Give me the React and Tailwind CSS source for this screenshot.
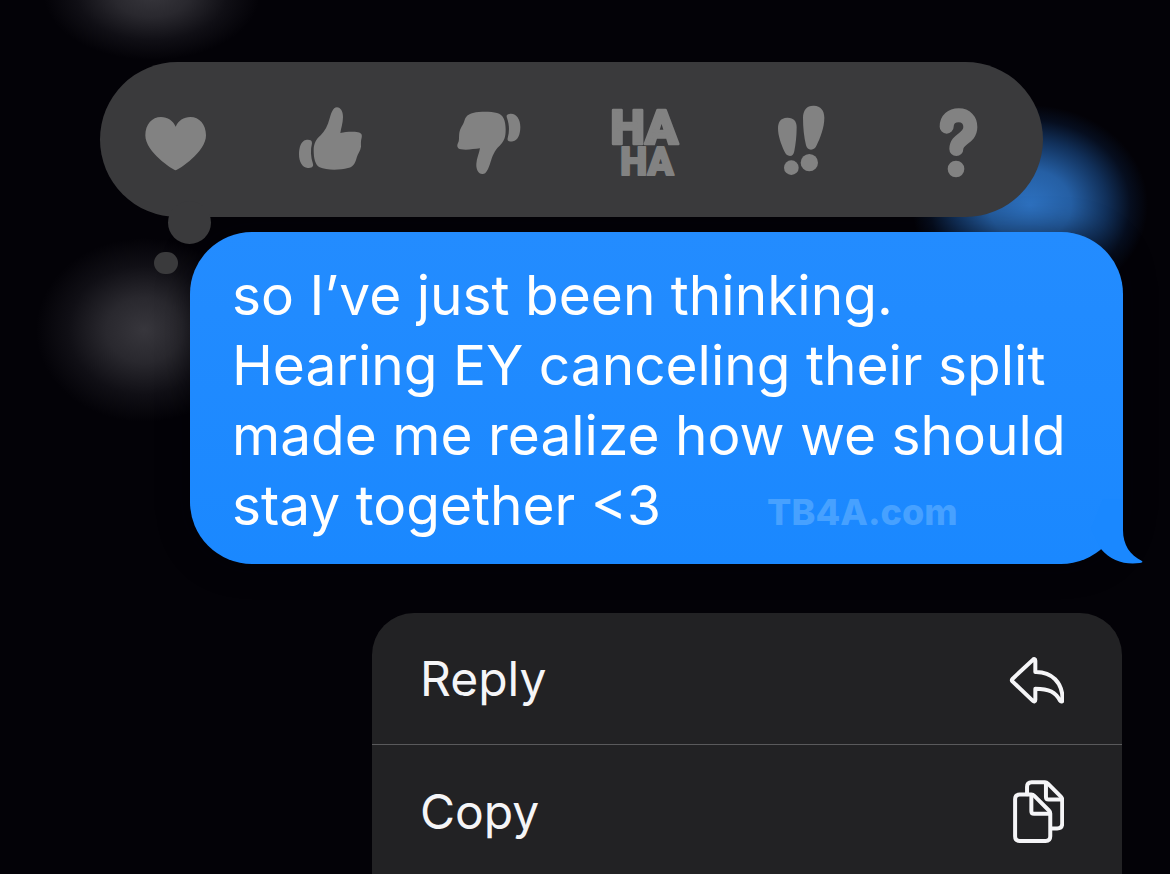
function HeartIcon() {
  return (
    <svg viewBox="18 15 240 240" className="size-20" fill="currentColor" aria-hidden="true">
      <path d="M137 226C128 224 46 172 46 121C46 88 66 66 93 66C113 66 129 77 137 95C145 77 161 66 181 66C208 66 228 88 228 121C228 172 146 224 137 226Z" />
    </svg>
  );
}

function ThumbUpIcon() {
  return (
    <svg viewBox="487 15 240 240" className="size-20" fill="currentColor" aria-hidden="true">
      <path d="M622 37C633 38 640 49 640 66C640 84 634 99 632 114C648 111 668 109 685 112C695 114 698 119 696 128C693 137 694 146 694 155C692 168 685 175 681 188C677 201 674 215 655 219C630 226 590 226 570 217C556 210 552 188 552 166C552 146 559 133 573 121C586 108 594 92 600 70C605 54 609 38 622 37Z" />
      <path d="M528 135C540 133 548 136 547 145C542 165 543 187 550 207C552 216 545 219 534 219C518 218 508 201 508 178C508 156 515 138 528 135Z" />
    </svg>
  );
}

function ThumbDownIcon() {
  return (
    <svg viewBox="26 15 240 240" className="size-20" fill="currentColor" aria-hidden="true">
      <path d="M126 237C114 236 107 224 108 206C109 190 116 176 119 160C100 162 80 166 62 163C52 161 49 154 52 146C58 137 55 128 57 113C60 98 68 91 72 78C76 65 82 58 98 54C122 49 152 50 170 54C189 58 196 78 196 103C196 128 192 138 178 152C162 166 156 184 150 203C144 221 138 238 126 237Z" />
      <path d="M207 57C226 53 240 71 240 96C240 119 232 136 218 139C207 141 200 138 202 130C208 109 207 88 200 69C197 61 200 58 207 57Z" />
    </svg>
  );
}

function HahaIcon() {
  return (
    <svg
      viewBox="496 15 240 240"
      className="size-20 overflow-visible font-['Roboto',sans-serif] font-black"
      fill="currentColor"
      stroke="currentColor"
      strokeLinejoin="round"
      textAnchor="middle"
    >
      <text x="614" y="147" fontSize="146" strokeWidth="8">HA</text>
      <text x="622" y="241" fontSize="115" strokeWidth="6">HA</text>
    </svg>
  );
}

function EmphasizeIcon() {
  return (
    <svg viewBox="5 15 240 240" className="size-20" fill="currentColor" aria-hidden="true">
      <path d="M80 68C99 67 109 78 109 96C109 124 106 148 102 168C100 178 96 183 89 183C81 183 76 178 72 169C62 147 53 122 53 100C53 81 61 69 80 68Z" />
      <circle cx="93" cy="218" r="22" />
      <path d="M161 32C181 33 192 46 192 68C192 98 180 127 169 151C165 160 160 164 152 164C144 164 140 160 137 151C131 127 128 98 128 69C128 45 140 31 161 32Z" />
      <circle cx="147" cy="203" r="26" />
    </svg>
  );
}

function QuestionIcon() {
  return (
    <svg viewBox="474 15 240 240" className="size-20" fill="currentColor" aria-hidden="true">
      <path
        d="M560 95C560 73 575 61 596 61C618 61 631 75 631 96C631 132 589 130 589 162"
        fill="none"
        stroke="currentColor"
        strokeWidth="42"
        strokeLinecap="round"
      />
      <circle cx="588" cy="222" r="25" />
    </svg>
  );
}

function ReplyIcon() {
  return (
    <svg
      viewBox="54 60 168 168"
      className="size-14"
      fill="none"
      stroke="currentColor"
      strokeWidth="12"
      strokeLinejoin="round"
      aria-hidden="true"
    >
      <path d="M129 86C132 83 136 84 136 89V123C185 122 218 154 218 207C218 212 213 213 210 209C197 184 178 173 136 173V206C136 212 132 213 128 209L68 152C65 149 65 146 68 143Z" />
    </svg>
  );
}

function CopyIcon() {
  return (
    <svg
      viewBox="54 444 168 196"
      className="h-[65px] w-14"
      fill="none"
      stroke="currentColor"
      strokeWidth="12"
      strokeLinecap="round"
      strokeLinejoin="round"
      aria-hidden="true"
    >
      <path d="M111 490V468Q111 454 125 454H165Q170 454 174 458L213 497Q217 501 217 506V578Q217 593 202 593H186" />
      <path d="M168 456V498Q168 506 176 506H215" />
      <path d="M89 491H124Q129 491 133 495L177 539Q181 543 181 548V617Q181 631 167 631H89Q75 631 75 617V505Q75 491 89 491Z" />
      <path d="M124 493V541Q124 549 132 549H179" />
    </svg>
  );
}

const reactions = [
  { label: "Love", Icon: HeartIcon },
  { label: "Like", Icon: ThumbUpIcon },
  { label: "Dislike", Icon: ThumbDownIcon },
  { label: "Laugh", Icon: HahaIcon },
  { label: "Emphasize", Icon: EmphasizeIcon },
  { label: "Question", Icon: QuestionIcon },
];

const actions = [
  { label: "Reply", Icon: ReplyIcon },
  { label: "Copy", Icon: CopyIcon },
];

// blurred conversation behind the focused message
function Backdrop() {
  return (
    <svg className="pointer-events-none absolute inset-0 size-full" aria-hidden="true">
      <defs>
        <radialGradient id="gray">
          <stop offset="0" stopColor="#37363c" />
          <stop offset="0.35" stopColor="#29282e" />
          <stop offset="0.7" stopColor="#100f15" />
          <stop offset="1" stopColor="#030207" />
        </radialGradient>
        <radialGradient id="blue">
          <stop offset="0" stopColor="#2d71c0" />
          <stop offset="0.35" stopColor="#255fa4" />
          <stop offset="0.65" stopColor="#11305a" />
          <stop offset="0.85" stopColor="#060e1f" />
          <stop offset="1" stopColor="#030207" />
        </radialGradient>
      </defs>
      <ellipse cx="152" cy="-6" rx="108" ry="66" fill="url(#gray)" />
      <ellipse cx="144" cy="330" rx="108" ry="92" fill="url(#gray)" />
      <ellipse cx="1030" cy="205" rx="118" ry="100" fill="url(#blue)" />
    </svg>
  );
}

function ReactionBar() {
  return (
    <div className="relative z-10 mr-[127px] ml-[100px] flex h-[156px] items-center justify-between rounded-full bg-[#3a3a3c] pr-[45px] pl-9 text-[#828282]">
      <span className="absolute top-[139px] left-[68px] size-[43px] rounded-full bg-[#3a3a3c]" />
      <span className="absolute top-[190px] left-[54px] h-[22px] w-6 rounded-full bg-[#3a3a3c]" />
      {reactions.map(({ label, Icon }) => (
        <button key={label} type="button" aria-label={label} className="relative pt-px">
          <Icon />
        </button>
      ))}
    </div>
  );
}

function MessageBubble() {
  return (
    <div className="relative mt-[15px] mr-[47px] ml-[190px] rounded-[62px] bg-linear-to-b from-[#238cff] to-[#1a88ff] px-[42px] pt-7 pb-6 shadow-[0_0_30px_rgba(2,2,8,0.5)]">
      <p className="text-[55px] leading-[70px] text-white">
        so I’ve just been thinking. Hearing EY canceling their split made me realize how we should stay together &lt;3
        <span className="ml-[106px] text-[36px] leading-none font-extrabold text-[#47a1ff]">TB4A.com</span>
      </p>
      <svg viewBox="0 0 60 66" className="absolute -right-5 -bottom-px h-[66px] w-[60px]" fill="#1a88ff" aria-hidden="true">
        <path d="M40 0V31C40 46 47 56 59 62C60 63 59 64 57 64C42 66 28 62 18 50L8 30L20 0Z" />
      </svg>
    </div>
  );
}

function ActionMenu() {
  return (
    <div className="mt-[49px] mr-12 w-[750px] max-w-full self-end divide-y divide-[#5a5a5c] overflow-hidden rounded-t-[42px] bg-[#222224]">
      {actions.map(({ label, Icon }) => (
        <button
          key={label}
          type="button"
          className="flex h-[132px] w-full items-center justify-between pt-0.5 pr-[58px] pl-12 text-[48px] leading-[60px] text-[#f5f5f7]"
        >
          {label}
          <Icon />
        </button>
      ))}
    </div>
  );
}

export default function App() {
  return (
    <main className="relative flex h-screen flex-col overflow-hidden bg-[#030207] pt-[62px] font-['Inter',sans-serif]">
      <Backdrop />
      <ReactionBar />
      <MessageBubble />
      <ActionMenu />
    </main>
  );
}
